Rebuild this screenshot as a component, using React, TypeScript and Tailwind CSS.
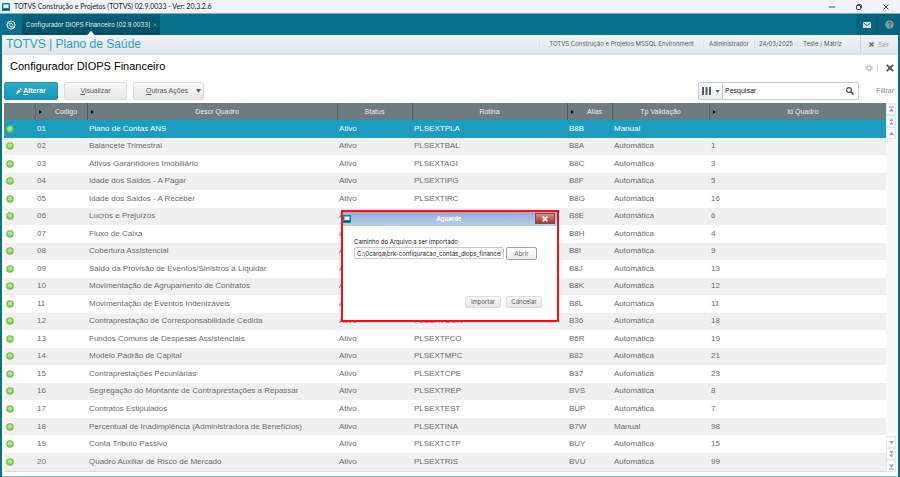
import { FC } from 'react';

interface Quadro {
  codigo: string;
  descricao: string;
  rotina: string;
  alias: string;
  validacao: string;
  id: string;
}

const quadros: Quadro[] = [
  { codigo: '01', descricao: 'Plano de Contas ANS', rotina: 'PLSEXTPLA', alias: 'B8B', validacao: 'Manual', id: '' },
  { codigo: '02', descricao: 'Balancete Trimestral', rotina: 'PLSEXTBAL', alias: 'B8A', validacao: 'Automática', id: '1' },
  { codigo: '03', descricao: 'Ativos Garantidores Imobiliário', rotina: 'PLSEXTAGI', alias: 'B8C', validacao: 'Automática', id: '3' },
  { codigo: '04', descricao: 'Idade dos Saldos - A Pagar', rotina: 'PLSEXTIPG', alias: 'B8F', validacao: 'Automática', id: '5' },
  { codigo: '05', descricao: 'Idade dos Saldos - A Receber', rotina: 'PLSEXTIRC', alias: 'B8G', validacao: 'Automática', id: '16' },
  { codigo: '06', descricao: 'Lucros e Prejuízos', rotina: '', alias: 'B8E', validacao: 'Automática', id: '6' },
  { codigo: '07', descricao: 'Fluxo de Caixa', rotina: '', alias: 'B8H', validacao: 'Automática', id: '4' },
  { codigo: '08', descricao: 'Cobertura Assistencial', rotina: '', alias: 'B8I', validacao: 'Automática', id: '9' },
  { codigo: '09', descricao: 'Saldo da Provisão de Eventos/Sinistros a Liquidar', rotina: '', alias: 'B8J', validacao: 'Automática', id: '13' },
  { codigo: '10', descricao: 'Movimentação de Agrupamento de Contratos', rotina: '', alias: 'B8K', validacao: 'Automática', id: '12' },
  { codigo: '11', descricao: 'Movimentação de Eventos Indenizáveis', rotina: '', alias: 'B8L', validacao: 'Automática', id: '11' },
  { codigo: '12', descricao: 'Contraprestação de Corresponsabilidade Cedida', rotina: 'PLSEXTCOR', alias: 'B36', validacao: 'Automática', id: '18' },
  { codigo: '13', descricao: 'Fundos Comuns de Despesas Assistenciais', rotina: 'PLSEXTFCO', alias: 'B6R', validacao: 'Automática', id: '19' },
  { codigo: '14', descricao: 'Modelo Padrão de Capital', rotina: 'PLSEXTMPC', alias: 'B82', validacao: 'Automática', id: '21' },
  { codigo: '15', descricao: 'Contraprestações Pecuniárias', rotina: 'PLSEXTCPE', alias: 'B37', validacao: 'Automática', id: '23' },
  { codigo: '16', descricao: 'Segregação do Montante de Contraprestações a Repassar', rotina: 'PLSEXTREP', alias: 'BVS', validacao: 'Automática', id: '8' },
  { codigo: '17', descricao: 'Contratos Estipulados', rotina: 'PLSEXTEST', alias: 'BUP', validacao: 'Automática', id: '7' },
  { codigo: '18', descricao: 'Percentual de Inadimplência (Administradora de Benefícios)', rotina: 'PLSEXTINA', alias: 'B7W', validacao: 'Manual', id: '98' },
  { codigo: '19', descricao: 'Conta Tributo Passivo', rotina: 'PLSEXTCTP', alias: 'BUY', validacao: 'Automática', id: '15' },
  { codigo: '20', descricao: 'Quadro Auxiliar de Risco de Mercado', rotina: 'PLSEXTRIS', alias: 'BVU', validacao: 'Automática', id: '99' },
];

const columns = [
  { label: '', width: 'w-[31px]', sortable: false },
  { label: 'Codigo', width: 'w-[52px]', sortable: true },
  { label: 'Descr Quadro', width: 'w-[250px]', sortable: true },
  { label: 'Status', width: 'w-[75px]', sortable: false },
  { label: 'Rotina', width: 'w-[155px]', sortable: false },
  { label: 'Alias', width: 'w-[45px]', sortable: true },
  { label: 'Tp Validação', width: 'w-[97px]', sortable: false },
  { label: 'Id Quadro', width: '', sortable: true },
];

const greyButton =
  'rounded-xs border border-[#dedede] bg-linear-to-b from-[#f8f8f8] to-[#e6e6e6] text-[#555b60]';

const AppIcon: FC = () => (
  <svg viewBox="0 0 16 16" className="size-2 shrink-0" aria-hidden="true">
    <rect width="16" height="16" rx="1" fill="#1687a3" />
    <rect x="3" y="3" width="10" height="7" fill="#e9f6f9" />
    <rect x="2" y="12" width="12" height="2" fill="#0a4f63" />
  </svg>
);

const Cross: FC<{ className: string; weight?: number }> = ({ className, weight = 2 }) => (
  <svg viewBox="0 0 10 10" className={className} fill="none" stroke="currentColor" strokeWidth={weight} aria-hidden="true">
    <path d="M1 1l8 8M9 1l-8 8" />
  </svg>
);

const ScrollButton: FC<{ label: string; d: string }> = ({ label, d }) => (
  <button aria-label={label} className="flex h-3 w-full items-center justify-center border border-[#e4e6e8] bg-[#f8f9fa]">
    <svg viewBox="0 0 10 14" className="h-[7px] w-[5px]" fill="#9a9fa3" aria-hidden="true">
      <path d={d} />
    </svg>
  </button>
);

const TitleBar: FC = () => (
  <header className="flex h-[13px] items-center bg-[#f0f3f9] pl-[2px]">
    <AppIcon />
    <span className="flex-1 pl-1 font-[Lato,sans-serif] text-[7px] text-[#222]">
      TOTVS Construção e Projetos (TOTVS) 02.9.0033 - Ver: 20.3.2.6
    </span>
    <div className="flex items-center gap-[21px] pr-[11px] text-[#222]">
      <button aria-label="Minimizar">
        <svg viewBox="0 0 12 12" className="size-[6px]" aria-hidden="true">
          <path d="M0 6h12" stroke="currentColor" strokeWidth="1.6" />
        </svg>
      </button>
      <button aria-label="Restaurar">
        <svg viewBox="0 0 12 12" className="size-[6px]" fill="none" stroke="currentColor" strokeWidth="1.6" aria-hidden="true">
          <rect x="1" y="3" width="8" height="8" rx="1" />
          <path d="M3 1h6a2 2 0 0 1 2 2v6" />
        </svg>
      </button>
      <button aria-label="Fechar janela">
        <Cross className="size-[6px]" weight={1.4} />
      </button>
    </div>
  </header>
);

const TabBar: FC = () => (
  <nav className="flex h-[22px] border-t border-[#78b6c6] bg-[#09708e]">
    <button aria-label="Início" className="flex w-[22px] items-center justify-center text-white">
      <svg viewBox="0 0 20 20" className="size-[10px]" fill="none" stroke="currentColor" strokeWidth="2" aria-hidden="true">
        <circle cx="10" cy="10" r="8" />
        <path d="M3 5.500l7.500 1.200c3 .6 3.600 3 1.500 4.600M17 14.500l-7.500-1.200c-3-.6-3.600-3-1.500-4.600" />
      </svg>
    </button>
    <div className="relative flex items-center gap-[3px] bg-linear-to-b from-[#086078] to-[#034f60] pr-[3px] pl-1 font-[Inter,sans-serif] text-[6px] text-[#e6f1f4]">
      <a href="#configurador">Configurador DIOPS Financeiro [02.9.0033]</a>
      <button aria-label="Fechar aba" className="text-[#8fb9c4]">
        <Cross className="size-1" weight={1.5} />
      </button>
      <svg viewBox="0 0 10 5" className="absolute bottom-0 left-1/2 h-1 w-[9px] -translate-x-1/2" fill="#fff" aria-hidden="true">
        <path d="M0 5c2 0 3.500-5 5-5s3 5 5 5z" />
      </svg>
    </div>
    <div className="ml-auto flex">
      <button aria-label="Mensagens" className="flex w-[21px] items-center justify-center bg-[#07647c]">
        <svg viewBox="0 0 16 12" className="h-[6px] w-2" aria-hidden="true">
          <rect width="16" height="12" rx="1" fill="#d3e3e8" />
          <path d="M1 2l7 5 7-5" fill="none" stroke="#07647c" strokeWidth="1.8" />
        </svg>
      </button>
      <button aria-label="Ajuda" className="flex w-[23px] items-center justify-center border-l border-[#055a70] bg-[#07647c]">
        <svg viewBox="0 0 20 20" className="size-[9px]" fill="none" aria-hidden="true">
          <circle cx="10" cy="10" r="9.500" fill="#7f9ca5" />
          <path d="M7 8c0-4 6.500-4 6.500-.5 0 2.300-3.200 2.300-3.200 4.700" stroke="#075a70" strokeWidth="2" />
          <circle cx="10.300" cy="15" r="1.300" fill="#075a70" />
        </svg>
      </button>
    </div>
  </nav>
);

const ProductBar: FC = () => (
  <div className="flex h-5 items-center border-b-2 border-[#dbe1e4] bg-linear-to-b from-[#f2f4f6] to-[#e2e6ea] text-[#55595d]">
    <h1 className="flex-1 pl-1 text-[12px] leading-none text-[#2a9fc0]">TOTVS | Plano de Saúde</h1>
    <ul className="flex items-center font-[Inter,sans-serif] text-[6px] leading-[10px] *:border-l *:border-[#dde1e5]">
      <li className="w-[164px] text-center">TOTVS Construção e Projetos MSSQL Environment</li>
      <li className="w-[51px] text-center">Administrador</li>
      <li className="w-[43px] text-center">24/03/2025</li>
      <li className="w-[50px] text-center">Teste / Matriz</li>
    </ul>
    <button className="ml-[13px] flex h-full w-[38px] items-center gap-1 border-l border-[#d0d4d8] pl-2 font-[Inter,sans-serif] text-[6px] text-[#9aa0a5]">
      <Cross className="size-[5px] text-[#5c6670]" weight={2.5} />
      Sair
    </button>
  </div>
);

const Toolbar: FC = () => (
  <div className="flex h-[18px] items-stretch gap-[6px] text-[7px]">
    <button className="flex w-[54px] items-center justify-center gap-px rounded-xs border border-[#1b93b1] bg-linear-to-b from-[#31abc9] to-[#1495b7] font-bold text-white">
      <svg viewBox="0 0 12 12" className="size-[6px]" fill="currentColor" aria-hidden="true">
        <path d="M0 12l1-4 5-5 3 3-5 5zM7 2l2-2 3 3-2 2z" />
      </svg>
      <span>
        <u>A</u>lterar
      </span>
    </button>
    <button className={`${greyButton} w-[63px]`}>
      <u>V</u>isualizar
    </button>
    <button className={`${greyButton} flex w-[71px] items-center justify-between pr-[2px] pl-3`}>
      <span>
        <u>O</u>utras Ações
      </span>
      <svg viewBox="0 0 10 8" className="h-1 w-[5px]" fill="#59626a" aria-hidden="true">
        <path d="M0 0h10L5 8z" />
      </svg>
    </button>
    <div className="ml-auto flex w-[161px] rounded-xs border border-[#c9cdd0] bg-white">
      <button aria-label="Colunas de pesquisa" className="flex w-6 items-center justify-between rounded-l-xs border-r border-[#c9cdd0] bg-linear-to-b from-white to-[#ececec] px-[2px]">
        <svg viewBox="0 0 20 16" className="h-2 w-[11px]" fill="#525c69" aria-hidden="true">
          <path d="M1 0h4v16H1zM8 0h4v16H8zM15 0h4v16h-4z" />
        </svg>
        <svg viewBox="0 0 10 7" className="h-[3px] w-[5px]" fill="#525c69" aria-hidden="true">
          <path d="M0 0h10L5 7z" />
        </svg>
      </button>
      <input aria-label="Pesquisar" defaultValue="Pesquisar" className="min-w-0 flex-1 bg-transparent px-[2px] text-[#222] outline-none" />
      <button aria-label="Buscar" className="w-[17px] text-[#46505c]">
        <svg viewBox="0 0 16 16" className="mx-auto size-2" fill="none" stroke="currentColor" strokeWidth="2.200" aria-hidden="true">
          <circle cx="6" cy="6" r="4.700" />
          <path d="M9.500 9.500l5.500 5.500" strokeWidth="3.500" />
        </svg>
      </button>
    </div>
    <a href="#filtrar" className="w-[31px] self-center pr-[2px] text-right text-[#85898d]">
      Filtrar
    </a>
  </div>
);

const QuadroTable: FC = () => (
  <table className="h-full w-full table-fixed border-collapse border-b border-[#d9d9d9] text-[8px] leading-none text-[#6c6c6c]">
    <thead>
      <tr className="h-[17px] bg-[#6e7b7f] text-[7px] text-[#eef0f0]">
        {columns.map((column, index) => (
          <th key={index} scope="col" className={`${column.width} border-r border-[#566165] p-0 font-normal last:border-r-0`}>
            <div className="flex items-center">
              {column.sortable && (
                <svg viewBox="0 0 6 8" className="mr-1 ml-[3px] h-1 w-[3px]" fill="#000" aria-hidden="true">
                  <path d="M0 0l6 4-6 4z" />
                </svg>
              )}
              <span className="flex-1 text-center">{column.label}</span>
            </div>
          </th>
        ))}
      </tr>
    </thead>
    <tbody>
      {quadros.map((quadro) => (
        <tr key={quadro.codigo} className="even:bg-[#f0f0f0] first:bg-[#1c9cbe] first:text-white *:p-0 *:pl-[2px]">
          <td>
            <svg viewBox="0 0 16 16" className="size-2" aria-hidden="true">
              <circle cx="8" cy="8" r="7.500" fill="#8aa382" />
              <circle cx="8" cy="8" r="6.200" fill="#6fd638" />
              <ellipse cx="8" cy="7" rx="4.500" ry="4" fill="#a9ee74" />
            </svg>
          </td>
          <td>{quadro.codigo}</td>
          <td>{quadro.descricao}</td>
          <td>Ativo</td>
          <td>{quadro.rotina}</td>
          <td>{quadro.alias}</td>
          <td>{quadro.validacao}</td>
          <td>{quadro.id}</td>
        </tr>
      ))}
    </tbody>
  </table>
);

const ImportDialog: FC = () => (
  <section role="dialog" aria-label="Aguarde" className="w-[218px] border-2 border-[#fb0d12] bg-white font-[Inter,sans-serif] text-[6px] text-[#222]">
    <div className="flex h-[14px] items-center bg-linear-to-b from-[#91aed3] to-[#b7cfe9] pr-[2px]">
      <AppIcon />
      <h2 className="flex-1 pl-3 text-center font-bold text-white">Aguarde</h2>
      <button aria-label="Fechar diálogo" className="flex h-[11px] w-5 items-center justify-center border border-[#8f4a44] bg-linear-to-b from-[#cf8d84] to-[#b02f20] text-white">
        <Cross className="size-[6px]" weight={3} />
      </button>
    </div>
    <form className="pt-[11px] pr-[10px] pb-3 pl-[11px]" onSubmit={(event) => event.preventDefault()}>
      <label htmlFor="caminho" className="block leading-[10px]">
        Caminho do Arquivo a ser importado
      </label>
      <div className="flex items-center gap-[2px]">
        <input
          id="caminho"
          defaultValue="C:\0carga\brk-configuracao_contas_diops_financeiro.csv"
          className="h-3 w-[150px] rounded-xs border border-[#c8c8c8] px-[2px] outline-none"
        />
        <button type="button" className="h-[13px] w-[31px] rounded-xs border border-[#9da4aa] bg-linear-to-b from-white to-[#ececec] text-[#5f6468]">
          Abrir
        </button>
      </div>
      <div className="flex justify-end gap-[5px] pt-9 pr-[5px]">
        <button type="submit" className={`${greyButton} h-3 w-9`}>
          Importar
        </button>
        <button type="button" className={`${greyButton} h-3 w-9`}>
          Cancelar
        </button>
      </div>
    </form>
  </section>
);

const App: FC = () => {
  return (
    <div className="flex h-screen flex-col bg-white font-['Liberation_Sans',Arial,sans-serif]">
      <TitleBar />
      <TabBar />
      <main className="flex min-h-0 flex-1 flex-col border-x-2 border-[#09708e]">
        <ProductBar />

        <div className="relative flex min-h-0 flex-1 flex-col border-b border-[#7dbcc9] pr-[2px] pb-1 pl-[2px]">
          <div className="flex h-[27px] items-center pr-[2px] pb-[2px] pl-[6px]">
            <h2 className="flex-1 pb-[2px] text-[11px] leading-none text-black">Configurador DIOPS Financeiro</h2>
            <button aria-label="Configurações" className="mr-1 border-r border-[#d5d5d5] pr-1">
              <svg viewBox="0 0 16 16" className="size-2" fill="none" stroke="#a7abae" aria-hidden="true">
                <circle cx="8" cy="8" r="4.500" strokeWidth="2" />
                <circle cx="8" cy="8" r="6.500" strokeWidth="2" strokeDasharray="2.550 2.550" />
              </svg>
            </button>
            <button aria-label="Fechar rotina" className="pl-1 text-[#414c5c]">
              <Cross className="size-2" weight={2.2} />
            </button>
          </div>

          <Toolbar />

          <div className="mt-[3px] flex min-h-0 flex-1">
            <div className="min-w-0 flex-1">
              <QuadroTable />
            </div>
            {/* Scroll controls */}
            <div className="flex w-[10px] flex-col bg-[#f8f9fa]">
              <ScrollButton label="Primeiro registro" d="M0 1h10v2H0zM5 4l5 7H0z" />
              <ScrollButton label="Página anterior" d="M5 0l4 6H1zM5 7l4 6H1z" />
              <ScrollButton label="Registro anterior" d="M5 4l5 6H0z" />
              <div className="flex-1" />
              <ScrollButton label="Próximo registro" d="M0 4h10l-5 6z" />
              <ScrollButton label="Próxima página" d="M1 0h8L5 6zM1 7h8l-4 6z" />
              <ScrollButton label="Último registro" d="M0 3h10l-5 7zM0 11h10v2H0z" />
            </div>
          </div>

          <div className="absolute inset-0 flex items-center justify-center">
            <ImportDialog />
          </div>
        </div>
      </main>
    </div>
  );
};

export default App;
